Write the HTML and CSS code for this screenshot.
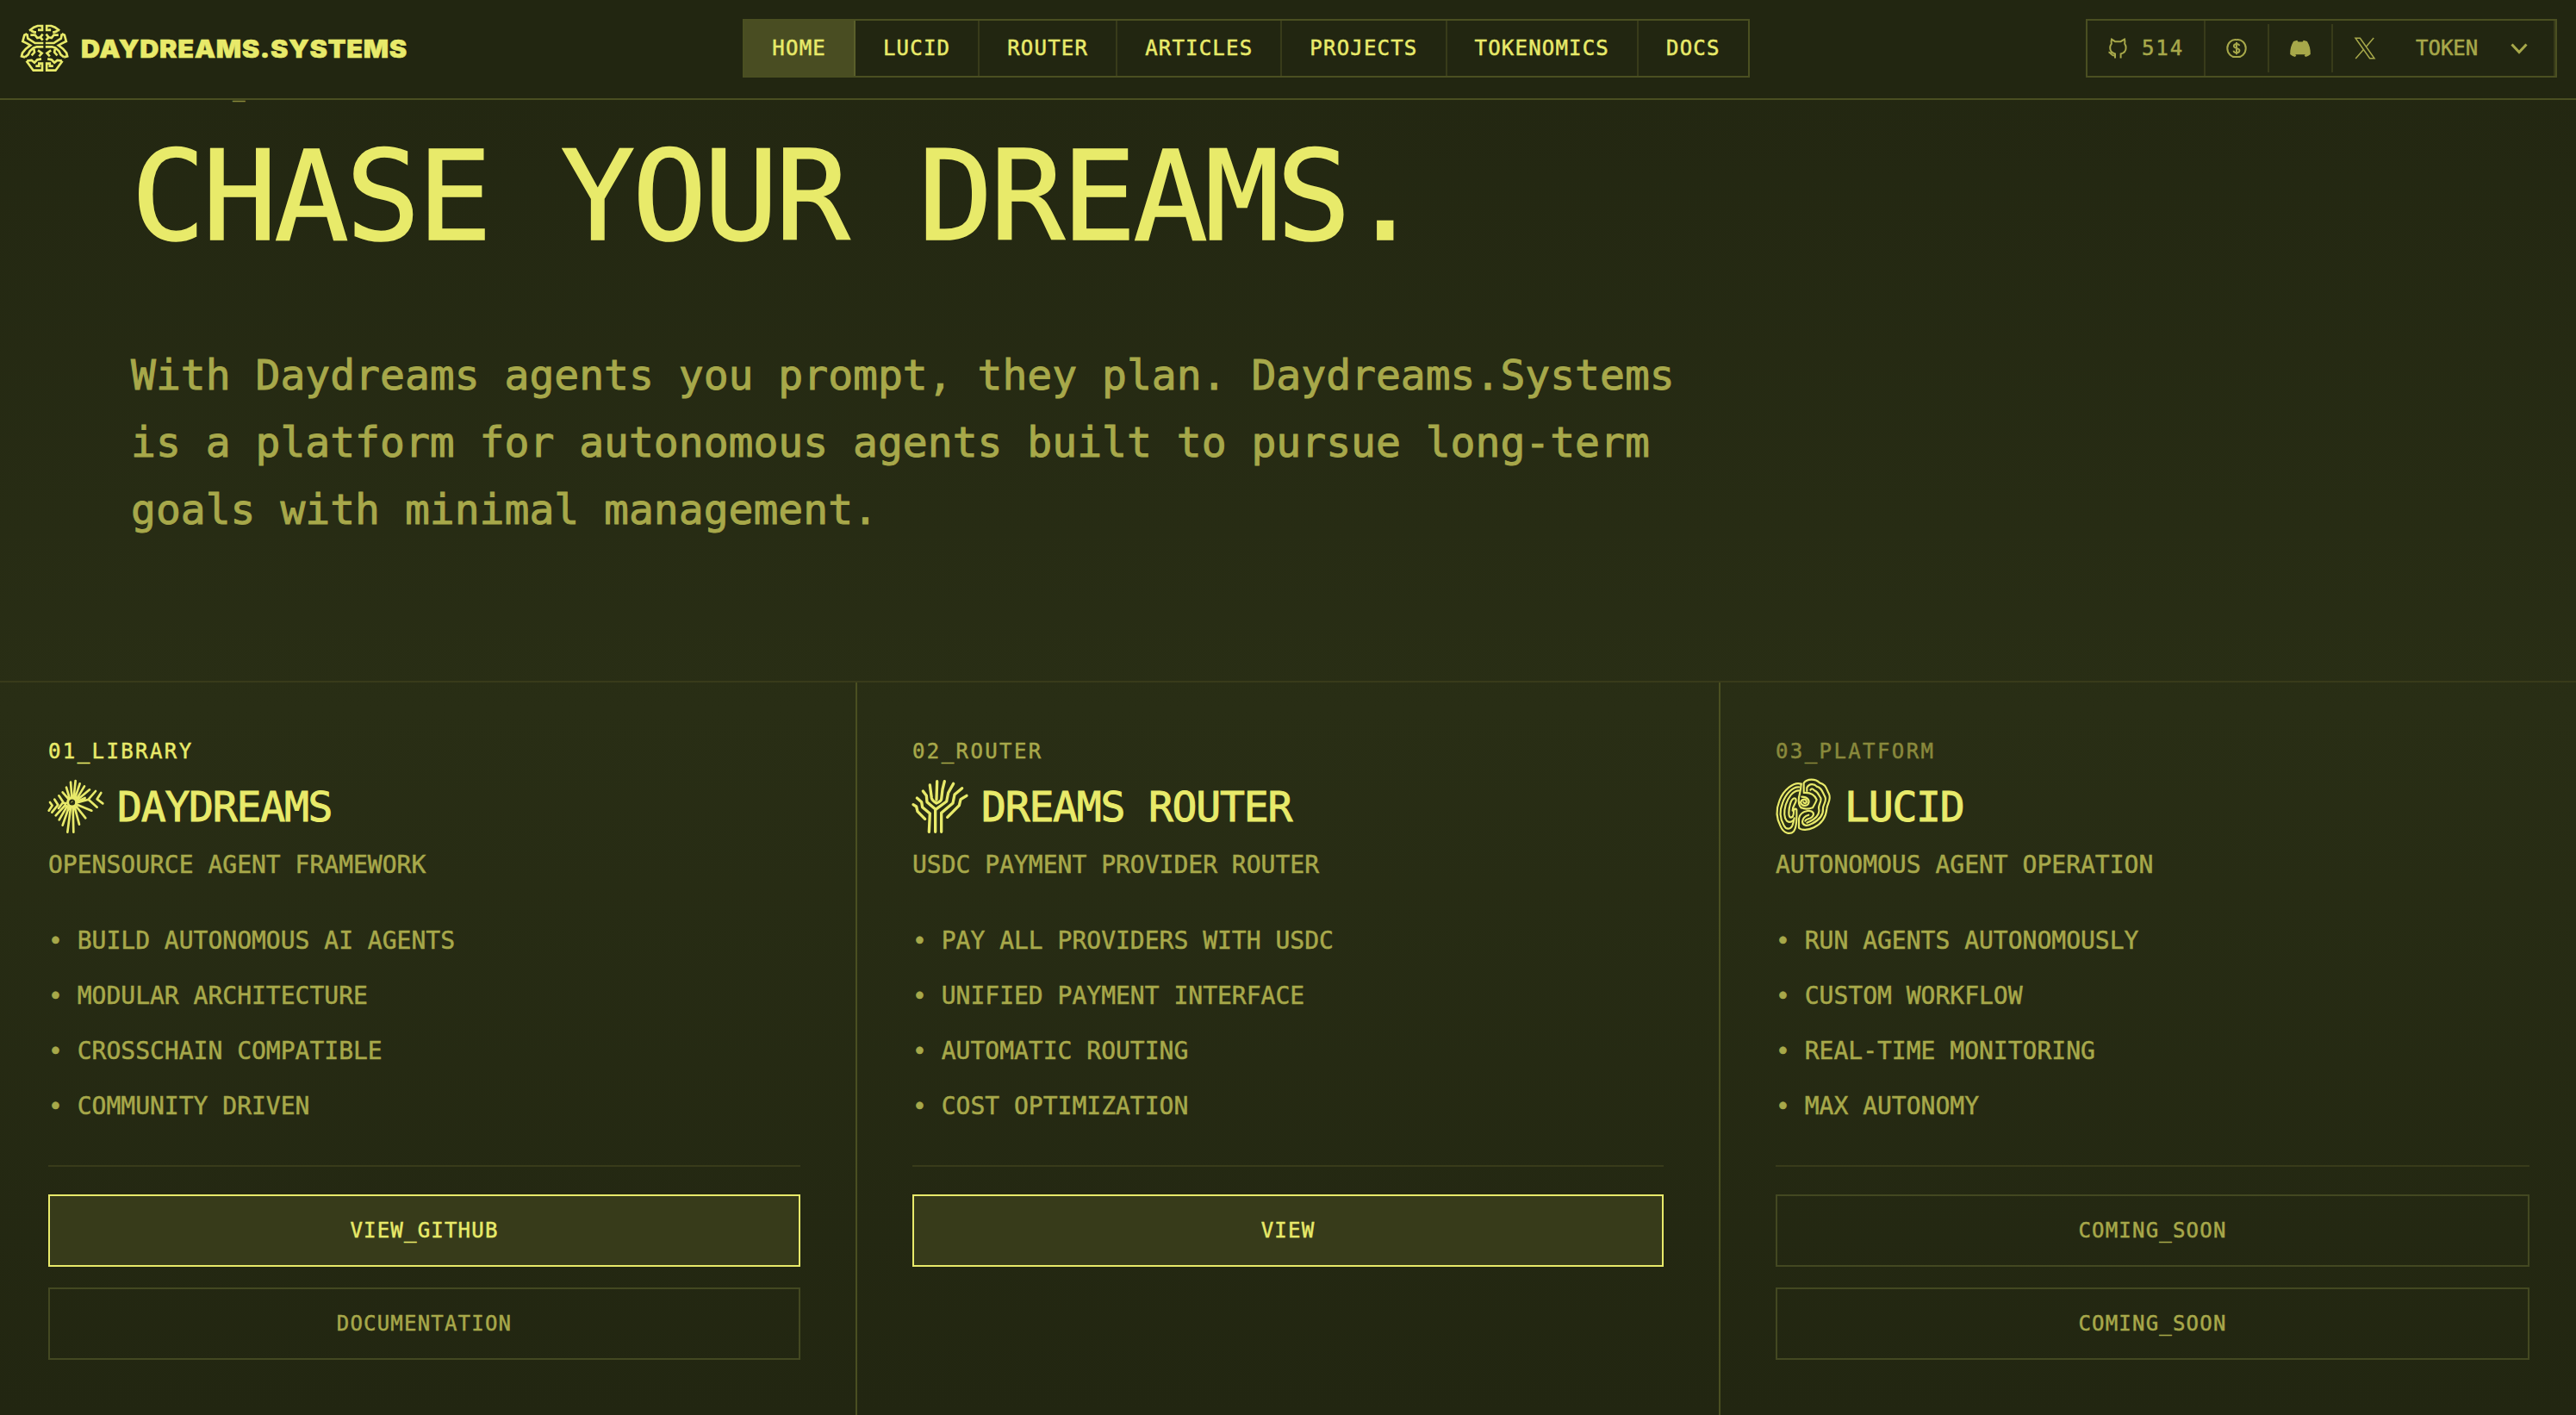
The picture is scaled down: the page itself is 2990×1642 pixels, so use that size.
FILE: index.html
```html
<!DOCTYPE html>
<html lang="en">
<head>
<meta charset="utf-8">
<title>Daydreams.Systems</title>
<link rel="stylesheet" href="styles.css">
</head>
<body>
<header class="header">
  <a class="brand">
    <svg class="brand-icon" viewBox="12 12 168 168">
      <defs>
        <g id="lobe">
          <path d="M42 35L58 23L71 18H87V33H76V28"/>
          <path d="M48 35L60 40H66"/>
          <path d="M34 46L25 50L19 72L34 79L46 86L30 98L18 112L15 124L27 127"/>
          <path d="M34 46L37 62L50 70L62 78H91"/>
          <path d="M46 50H62L70 60L80 58L89 47M82 60L89 68"/>
          <path d="M91 91H68L56 95L44 106L38 118L27 127"/>
          <path d="M58 98L60 110L50 121M72 103L86 113L76 124"/>
          <path d="M32 140L56 173H87V149H76V158H64"/>
          <path d="M34 140L50 138L60 146L70 136L84 133"/>
        </g>
      </defs>
      <g class="ink">
        <use href="#lobe"/>
        <use href="#lobe" transform="translate(189.5 0) scale(-1 1)"/>
      </g>
    </svg>
    <span class="brand-name">DAYDREAMS.SYSTEMS</span>
  </a>
  <nav class="nav">
    <a class="nav-item active">HOME</a>
    <a class="nav-item">LUCID</a>
    <a class="nav-item">ROUTER</a>
    <a class="nav-item">ARTICLES</a>
    <a class="nav-item">PROJECTS</a>
    <a class="nav-item">TOKENOMICS</a>
    <a class="nav-item">DOCS</a>
  </nav>
  <div class="tools">
    <a class="tool stars">
      <svg class="tool-icon" viewBox="0 0 24 24"><path class="line" d="M9 23.5V18.5C5.5 17.5 3.2 15 3.2 11.5C3.2 9.5 3.8 8 4.8 6.8C4.3 5 4.4 3.4 5 1.6L9 4.2H15.5L20 1.6C20.5 3.4 20.6 5 20.2 6.8C21.2 8 21.6 9.5 21.6 11.5C21.6 15 19.5 17.5 15.6 18.5V23.5M9 20.5C5 21.5 4.5 17 1.5 16.6"/></svg>
      <span class="star-count">514</span>
    </a>
    <a class="tool small"><svg class="tool-icon" viewBox="0 0 24 24"><path class="line" d="M12 2.2A9.4 10 0 1 0 12 22A9.4 10 0 1 0 12 2.2M15.2 9.2C15 7.8 13.8 7 12 7C10 7 8.9 8.1 8.9 9.5C8.9 12.8 15.4 11.2 15.4 14.6C15.4 16.2 14 17.2 12 17.2C10 17.2 8.7 16.2 8.6 14.7M12 5V19.2"/></svg></a>
    <a class="tool small"><svg class="tool-icon" viewBox="0 0 24 24"><path class="solid" d="M8.3 2.7L9.5 4.6H14.6L15.8 2.7L19.9 4C22.5 8.2 24 12.8 23.8 19C22 20.6 20 21.6 18 22L16.6 20.1L18.3 19.2H5.8L7.4 20.1L6 22C4 21.6 2 20.6.2 19C0 12.8 1.500 8.200 4.100 4Z"/></svg></a>
    <a class="tool"><svg class="tool-icon" viewBox="0 0 24 24"><path class="line thin" d="M1 .2H6.400L23 23.800H17.600ZM22.200 0L13.200 10.400M10.400 13.600L1.200 24"/></svg></a>
    <a class="token">TOKEN<svg class="chevron" viewBox="0 0 24 24"><path d="M3.500 7.500L12 16.500L20.500 7.500"/></svg></a>
  </div>
</header>

<main>
  <section class="hero">
    <p class="eyebrow">PRODUCT_ECOSYSTEM</p>
    <h1 class="title">CHASE YOUR DREAMS.</h1>
    <p class="lead">With Daydreams agents you prompt, they plan. Daydreams.Systems is a platform for autonomous agents built to pursue long-term goals with minimal management.</p>
  </section>

  <section class="products">
    <article class="card">
      <p class="label bright">01_LIBRARY</p>
      <div class="heading">
        <svg class="mark" viewBox="48 192 192 192">
          <g class="rays">
            <path d="M126 203L130 254M143 198L137 254M158 208L142 256M174 217L148 260M192 229L150 264M111 221L122 258M98 238L117 260M85 250L100 272L84 294"/>
            <path d="M115 377L126 292M136 377L134 290M156 350L140 290M178 328L146 288M199 302L150 282M98 353L120 290M86 334L114 286M74 319L108 282M110 276L100 276"/>
            <path d="M213 234L188 263L218 290M232 240L218 262L238 277M150 274L186 264M70 263L82 282L61 308M54 273L62 284L50 302M150 270L176 258"/>
          </g>
          <circle class="iris" cx="131" cy="273" r="15"/>
          <path class="glint" d="M128 274L133 269"/>
        </svg>
        <h2 class="name">DAYDREAMS</h2>
      </div>
      <p class="subtitle">OPENSOURCE AGENT FRAMEWORK</p>
      <ul class="points">
        <li>• BUILD AUTONOMOUS AI AGENTS</li>
        <li>• MODULAR ARCHITECTURE</li>
        <li>• CROSSCHAIN COMPATIBLE</li>
        <li>• COMMUNITY DRIVEN</li>
      </ul>
      <div class="actions">
        <a class="button primary">VIEW_GITHUB</a>
        <a class="button">DOCUMENTATION</a>
      </div>
    </article>

    <article class="card">
      <p class="label">02_ROUTER</p>
      <div class="heading">
        <svg class="mark" viewBox="57 192 192 192">
          <g class="branches">
            <path d="M143 200L141 264M118 213L124 258Q126 268 141 276Q156 270 158 262L162 228L169 200"/>
            <path d="M94 234L106 250L108 272L138 298L176 270L182 240L200 208M137 376V300"/>
            <path d="M73 258L89 272L92 290L118 312L115 376M230 224L204 246L198 276L158 310V376"/>
            <path d="M60 281L71 288L75 305L101 331M246 250L225 263L220 284L179 325"/>
          </g>
        </svg>
        <h2 class="name">DREAMS ROUTER</h2>
      </div>
      <p class="subtitle">USDC PAYMENT PROVIDER ROUTER</p>
      <ul class="points">
        <li>• PAY ALL PROVIDERS WITH USDC</li>
        <li>• UNIFIED PAYMENT INTERFACE</li>
        <li>• AUTOMATIC ROUTING</li>
        <li>• COST OPTIMIZATION</li>
      </ul>
      <div class="actions">
        <a class="button primary">VIEW</a>
      </div>
    </article>

    <article class="card">
      <p class="label faint">03_PLATFORM</p>
      <div class="heading">
        <svg class="mark" viewBox="3 12 192 192">
          <g class="folds">
            <path d="M92 29C66 20 30 50 16 88C4 118 6 150 20 176C30 202 54 206 66 194C76 182 77 160 76 124C78 112 66 114 66 124C66 140 62 146 56 146C46 144 48 118 54 98C60 76 74 74 74 86C74 98 62 104 62 122"/>
            <path d="M84 40C62 38 36 66 27 96C16 122 18 150 32 174C40 190 56 188 62 172C66 160 66 156 68 148"/>
            <path d="M84 52C62 52 46 78 38 102C32 124 32 146 42 158C50 164 58 162 64 156"/>
            <path d="M92 29C91 50 87 62 84 76C82 90 84 104 92 112"/>
            <path d="M101 56V26C112 10 142 10 156 25C180 30 180 50 189 64C198 84 182 98 181 116C178 150 162 168 136 181C114 192 92 190 84 182V150C86 132 98 126 114 123C134 120 140 134 130 144C120 154 110 148 106 158"/>
            <path d="M112 54V42C120 26 138 28 146 38C164 42 166 58 174 72C184 86 168 100 168 114C170 140 152 156 130 167C112 178 96 174 96 160C98 144 108 140 118 137"/>
            <path d="M124 50C128 44 134 46 138 52C150 56 152 66 160 78C164 88 154 98 153 112C158 130 148 144 134 153C126 158 118 162 112 164"/>
            <path d="M101 60C124 58 138 66 146 84C142 96 136 104 132 112C120 116 106 118 92 112M100 92C104 100 112 96 110 88C106 80 92 82 90 94C94 106 108 108 116 100C124 86 114 74 94 74"/>
          </g>
        </svg>
        <h2 class="name">LUCID</h2>
      </div>
      <p class="subtitle">AUTONOMOUS AGENT OPERATION</p>
      <ul class="points">
        <li>• RUN AGENTS AUTONOMOUSLY</li>
        <li>• CUSTOM WORKFLOW</li>
        <li>• REAL-TIME MONITORING</li>
        <li>• MAX AUTONOMY</li>
      </ul>
      <div class="actions">
        <a class="button">COMING_SOON</a>
        <a class="button">COMING_SOON</a>
      </div>
    </article>
  </section>
</main>
</body>
</html>
```
FILE: styles.css
```css
:root {
  --bright: #e8ea6a;
  --dim: #a7a84a;
  --faint: #89893c;
  --edge: #4a4f21;
  --edge-soft: #383b1a;
  --bg: #222611;
}

* { box-sizing: border-box; margin: 0; padding: 0; }

body {
  height: 1642px;
  overflow: hidden;
  background: linear-gradient(#222611 0, #292e15 50%, #222611 100%);
  color: var(--dim);
  font-family: "DejaVu Sans Mono", Menlo, monospace;
  font-size: 24px;
  -webkit-text-stroke: 0.5px currentColor;
}

svg { display: block; overflow: visible; }
svg path, svg circle { fill: none; }

.header {
  position: relative;
  z-index: 1;
  display: flex;
  justify-content: space-between;
  align-items: flex-start;
  height: 116px;
  padding: 22px 22px 0 24px;
  background: var(--bg);
  border-bottom: 2px solid var(--edge);
}

.brand { display: flex; align-items: center; gap: 14px; width: 448px; height: 68px; color: var(--bright); }
.brand-icon { flex: none; width: 56px; height: 56px; }
.ink { stroke: var(--bright); stroke-width: 8; }
.brand-name {
  font-family: Inter, sans-serif;
  font-size: 28.5px;
  font-weight: 900;
  letter-spacing: 0.6px;
  white-space: nowrap;
  transform: scaleX(1.077);
  transform-origin: left;
}

.nav { display: flex; height: 68px; border: 2px solid var(--edge); color: var(--bright); }
.nav-item {
  display: flex;
  align-items: center;
  padding: 0 32px;
  letter-spacing: 0.05em;
  border-right: 2px solid var(--edge-soft);
}
.nav-item:last-child { border-right: 0; }
.nav-item.active { background: #494d22; border-color: #5a5f2a; }

.tools { display: flex; align-items: center; width: 547px; height: 68px; border: 2px solid var(--edge); }
.tool { display: flex; align-items: center; justify-content: center; width: 74px; height: 56px; }
.tool.small { border-right: 2px solid var(--edge-soft); }
.tool.stars { gap: 16px; width: 137px; height: 64px; border-right: 2px solid var(--edge-soft); }
.tool-icon { width: 24px; height: 24px; }
.line { stroke: var(--dim); stroke-width: 2; }
.line.thin { stroke-width: 1.5; }
.solid { fill: var(--dim) !important; }
.star-count { letter-spacing: 0.08em; }
.token { display: flex; flex: 1; align-items: center; justify-content: space-between; height: 64px; padding: 0 28px 0 22px; border-right: 2px solid var(--edge-soft); }
.chevron { width: 24px; height: 24px; }
.chevron path { stroke: var(--dim); stroke-width: 3; }

.hero { display: flow-root; height: 674px; padding: 0 152px; }
.eyebrow { height: 32px; margin: -28px 0 36px; line-height: 32px; letter-spacing: 0.1em; color: var(--faint); }
.title { color: var(--bright); font-size: 144px; font-weight: 400; line-height: 144px; letter-spacing: -0.025em; white-space: nowrap; -webkit-text-stroke-width: 1.5px; }
.lead { width: 1800px; margin-top: 96px; font-size: 48px; line-height: 78px; -webkit-text-stroke-width: 1px; }

.products { display: grid; grid-template-columns: 995px 1002px 1fr; height: 852px; border-top: 2px solid var(--edge-soft); }
.card { padding: 64px; border-right: 2px solid var(--edge); }
.card:first-child { padding-left: 56px; }
.card:last-child { padding-right: 54px; border-right: 0; }

.label { line-height: 32px; letter-spacing: 0.1em; }
.label.bright { color: var(--bright); }
.label.faint { color: var(--faint); }
.heading { display: flex; align-items: center; gap: 16px; margin-top: 16px; }
.mark { flex: none; width: 64px; height: 64px; }
.rays path, .branches path { stroke: var(--bright); stroke-width: 8; stroke-linecap: round; stroke-linejoin: round; }
.branches path { stroke-width: 10; }
.iris { stroke: var(--bright); stroke-width: 9; }
.mark .iris { fill: #292e15; }
.glint { stroke: var(--bright); stroke-width: 3; }
.folds path { stroke: var(--bright); stroke-width: 6.5; stroke-linecap: round; }
.name { color: var(--bright); font-size: 48px; font-weight: 400; line-height: 64px; letter-spacing: -0.025em; white-space: nowrap; -webkit-text-stroke-width: 1px; }
.subtitle { margin-top: 16px; font-size: 28px; line-height: 40px; }
.points { display: grid; gap: 24px; margin-top: 48px; list-style: none; font-size: 28px; line-height: 40px; }
.actions { display: grid; gap: 24px; margin-top: 48px; padding-top: 32px; border-top: 2px solid var(--edge-soft); }
.button { display: flex; align-items: center; justify-content: center; height: 84px; border: 2px solid #434821; letter-spacing: 0.05em; }
.button.primary { background: #373b1a; border-color: var(--bright); color: var(--bright); }
```
